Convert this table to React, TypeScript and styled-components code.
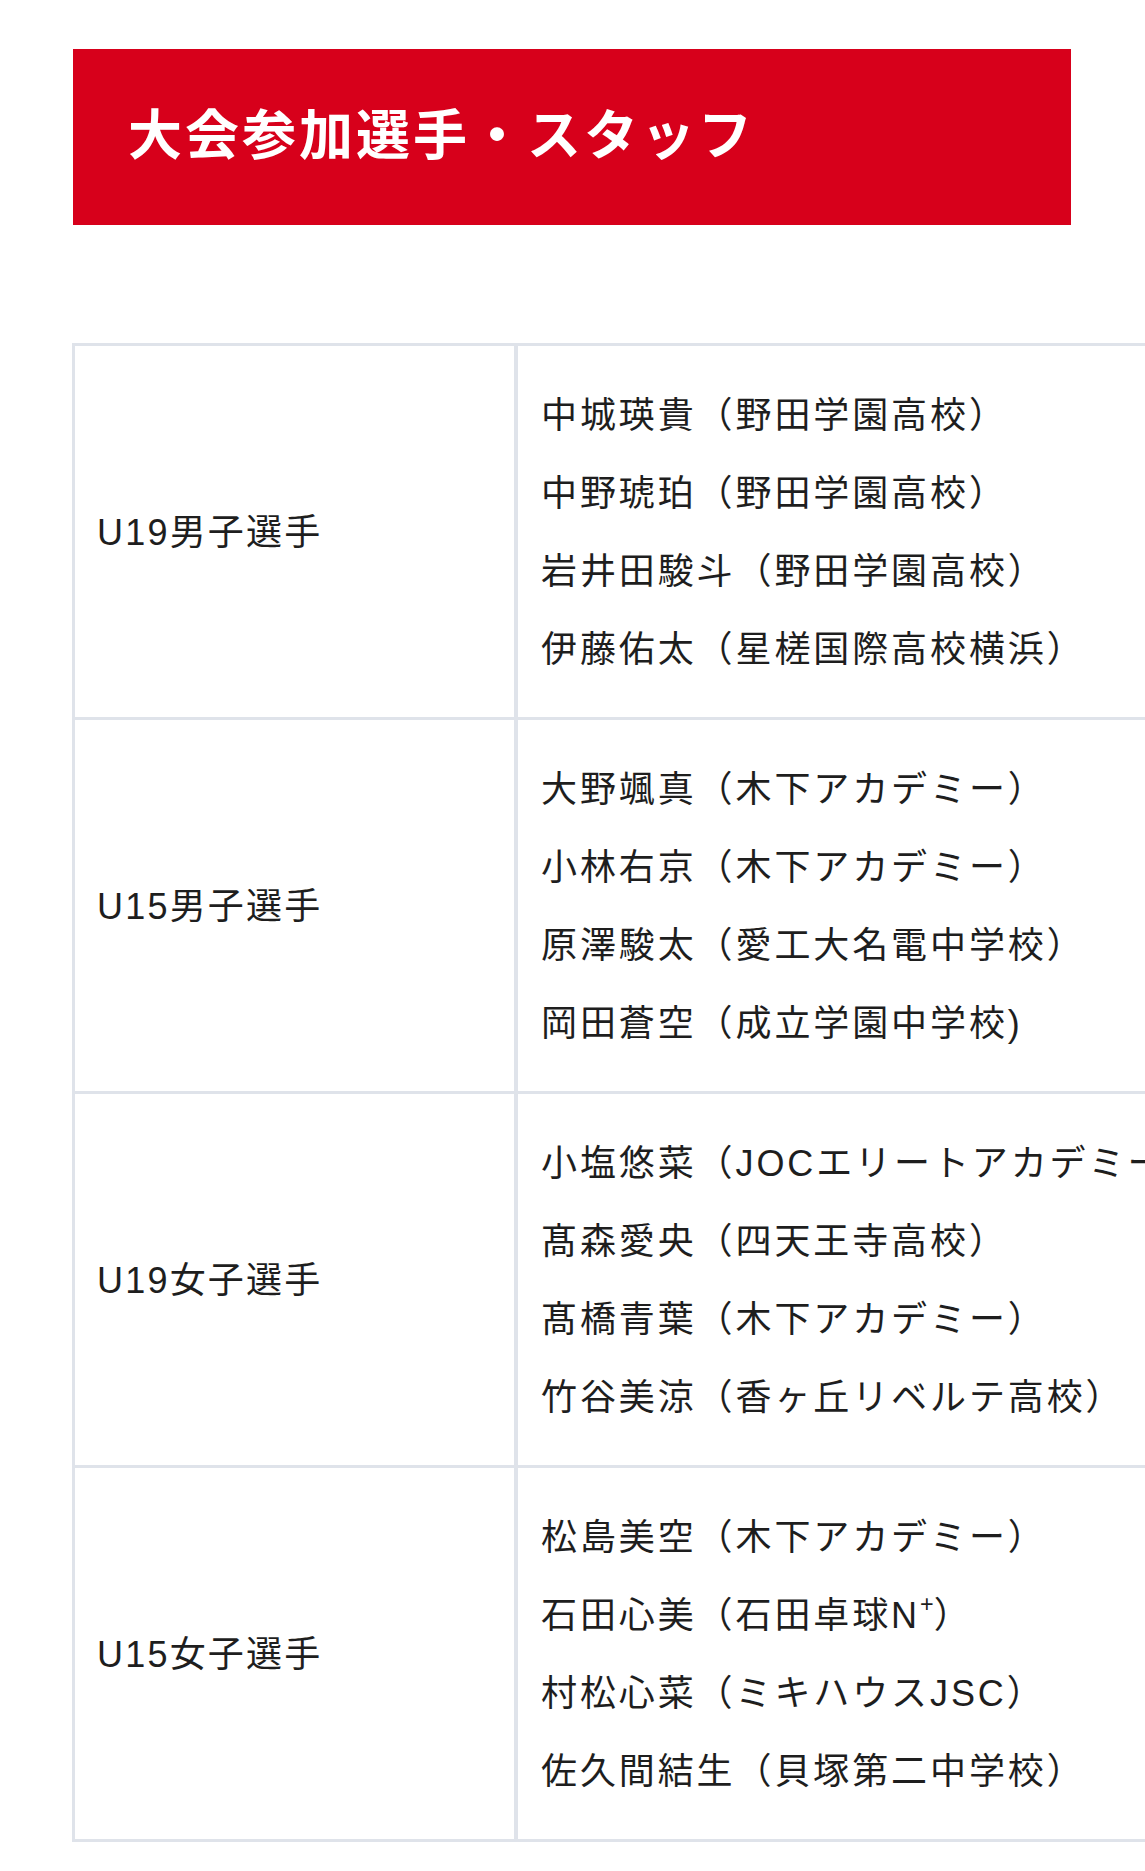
import React from "react";
import styled, { createGlobalStyle } from "styled-components";

const GlobalStyle = createGlobalStyle`
  html, body {
    margin: 0;
    padding: 0;
    background: #fff;
    overflow-x: hidden;
  }
  body {
    font-family: "Liberation Sans", "Noto Sans CJK JP", sans-serif;
    color: #1e1e1e;
  }
`;

const colors = {
  red: "#d7001b",
  border: "#dfe3ea",
  text: "#1e1e1e",
};

const Page = styled.div`
  padding: 49px 0 30px 73px;
`;

const Heading = styled.h2`
  box-sizing: border-box;
  width: 998px;
  height: 176px;
  margin: 0;
  padding: 0 0 11px 55px;
  display: flex;
  align-items: center;
  background-color: ${colors.red};
  color: #fff;
  font-family: "Noto Sans CJK JP", sans-serif;
  font-size: 54px;
  font-weight: 700;
  letter-spacing: 3px;
`;

const Table = styled.div`
  width: 1200px;
  margin: 118px 0 0 -1px;
  border: 3px solid ${colors.border};
  border-right: none;
`;

const Row = styled.div`
  display: flex;
  height: 371px;

  & + & {
    border-top: 3px solid ${colors.border};
  }
`;

const LabelCell = styled.div`
  box-sizing: border-box;
  width: 443px;
  flex-shrink: 0;
  padding: 0 0 6px 22px;
  display: flex;
  align-items: center;
  border-right: 4px solid ${colors.border};
  font-size: 36px;
  letter-spacing: 2.2px;
  color: ${colors.text};
`;

const NamesCell = styled.ul`
  flex: 1;
  margin: 0;
  padding: 31px 0 0 23px;
  list-style: none;
`;

const Name = styled.li`
  font-size: 36px;
  line-height: 78px;
  letter-spacing: 2.9px;
  white-space: nowrap;
  color: ${colors.text};
`;

const Sup = styled.sup`
  font-size: 0.65em;
  line-height: 0;
  vertical-align: 0.7em;
  letter-spacing: 0;
`;

const groups: { label: string; names: React.ReactNode[] }[] = [
  {
    label: "U19男子選手",
    names: [
      "中城瑛貴（野田学園高校）",
      "中野琥珀（野田学園高校）",
      "岩井田駿斗（野田学園高校）",
      "伊藤佑太（星槎国際高校横浜）",
    ],
  },
  {
    label: "U15男子選手",
    names: [
      "大野颯真（木下アカデミー）",
      "小林右京（木下アカデミー）",
      "原澤駿太（愛工大名電中学校）",
      "岡田蒼空（成立学園中学校)",
    ],
  },
  {
    label: "U19女子選手",
    names: [
      "小塩悠菜（JOCエリートアカデミー）",
      "髙森愛央（四天王寺高校）",
      "髙橋青葉（木下アカデミー）",
      "竹谷美涼（香ヶ丘リベルテ高校）",
    ],
  },
  {
    label: "U15女子選手",
    names: [
      "松島美空（木下アカデミー）",
      <>
        石田心美（石田卓球N<Sup>+</Sup>）
      </>,
      "村松心菜（ミキハウスJSC）",
      "佐久間結生（貝塚第二中学校）",
    ],
  },
];

const App = () => {
  return (
    <>
      <GlobalStyle />
      <Page>
        <Heading>大会参加選手・スタッフ</Heading>
        <Table>
          {groups.map((group) => (
            <Row key={group.label}>
              <LabelCell>{group.label}</LabelCell>
              <NamesCell>
                {group.names.map((name, i) => (
                  <Name key={i}>{name}</Name>
                ))}
              </NamesCell>
            </Row>
          ))}
        </Table>
      </Page>
    </>
  );
};

export default App;
